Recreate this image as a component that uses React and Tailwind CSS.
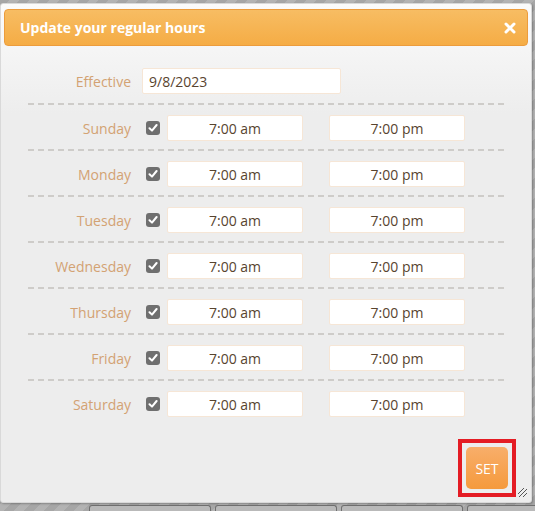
const DAYS = ['Sunday', 'Monday', 'Tuesday', 'Wednesday', 'Thursday', 'Friday', 'Saturday'];

function Check() {
  return (
    <div className="flex h-[14px] w-[14px] items-center justify-center rounded-[3px] bg-[#6f6f6f]">
      <svg width="10" height="10" viewBox="0 0 10 10" fill="none">
        <path d="M1.5 5.2 L4 7.6 L8.6 2" stroke="#fff" strokeWidth="2" strokeLinecap="round" strokeLinejoin="round" />
      </svg>
    </div>
  );
}

function Dash() {
  return <div className="h-[2px] w-[476px] bg-[repeating-linear-gradient(90deg,#ceccc9_0_6px,transparent_6px_10px)]" />;
}

function TimeBox({ value }) {
  return (
    <div className="flex h-[26px] w-[136px] items-center justify-center rounded-[2px] border border-[#f6e6d6] bg-white text-[14px] text-[#58442f]">
      {value}
    </div>
  );
}

function DayRow({ day }) {
  return (
    <div className="flex flex-col">
      <Dash />
      <div className="flex items-center pt-[10px] pb-[8px]">
        <div className="w-[103px] text-right text-[14px] text-[#d3a273]">{day}</div>
        <div className="ml-[15px]">
          <Check />
        </div>
        <div className="ml-[7px]">
          <TimeBox value="7:00 am" />
        </div>
        <div className="ml-[26px]">
          <TimeBox value="7:00 pm" />
        </div>
      </div>
    </div>
  );
}

export default function App() {
  return (
    <div
      className="flex h-[511px] w-[535px] flex-col overflow-hidden bg-[repeating-linear-gradient(135deg,#a6a6a6_0_7px,#b3b3b3_7px_14px)]"
      style={{ fontFamily: '"Open Sans", "Noto Sans", sans-serif' }}
    >
      <div className="relative mt-[3px] flex h-[500px] w-[532px] shrink-0 flex-col rounded-[3px] border border-[#d9d9d9] bg-[linear-gradient(#fbfbfb,#ededed_110px)] shadow-[1px_1px_2px_rgba(0,0,0,0.25)]">
        <div className="mx-[3px] mt-[5px] flex h-[37px] shrink-0 items-center justify-between rounded-[4px] border border-[#ec9c3c] bg-[linear-gradient(#f7bd63,#f5ac45)] px-[15px]">
          <span className="text-[14px] font-bold text-white">Update your regular hours</span>
          <svg width="12" height="12" viewBox="0 0 12 12" className="mr-[-4px]">
            <path d="M2 2 L10 10 M10 2 L2 10" stroke="#fff" strokeWidth="3" strokeLinecap="round" />
          </svg>
        </div>

        <div className="ml-[27px] mt-[22px] flex flex-col">
          <div className="flex h-[35px] items-start">
            <div className="flex h-[26px] items-center">
              <div className="w-[103px] text-right text-[14px] text-[#d3a273]">Effective</div>
              <div className="ml-[11px] flex h-[26px] w-[199px] items-center rounded-[2px] border border-[#f6e6d6] bg-white pl-[6px] text-[14px] text-[#58442f]">
                9/8/2023
              </div>
            </div>
          </div>
          {DAYS.map((d) => (
            <DayRow key={d} day={d} />
          ))}
        </div>

        <div className="mt-auto mb-[5px] mr-[15px] self-end border-4 border-[#e41c24] p-[4px]">
          <button className="flex h-[42px] w-[42px] items-center justify-center rounded-[5px] bg-[linear-gradient(#f8ae6a,#f59a3d)] text-[14px] text-white">
            SET
          </button>
        </div>

        <svg width="12" height="12" viewBox="0 0 12 12" className="absolute bottom-[4px] right-[3px]">
          <path d="M11 3 L3 11 M11 7 L7 11 M8 2 L2 8" stroke="#555" strokeWidth="1" />
        </svg>
      </div>

      <div className="mt-[2px] ml-[89px] flex gap-[4px]">
        {[0, 1, 2, 3].map((i) => (
          <div key={i} className="h-[10px] w-[122px] shrink-0 rounded-t-[3px] border-x border-t border-[#707070] bg-[#b9b9b9]" />
        ))}
      </div>
    </div>
  );
}
